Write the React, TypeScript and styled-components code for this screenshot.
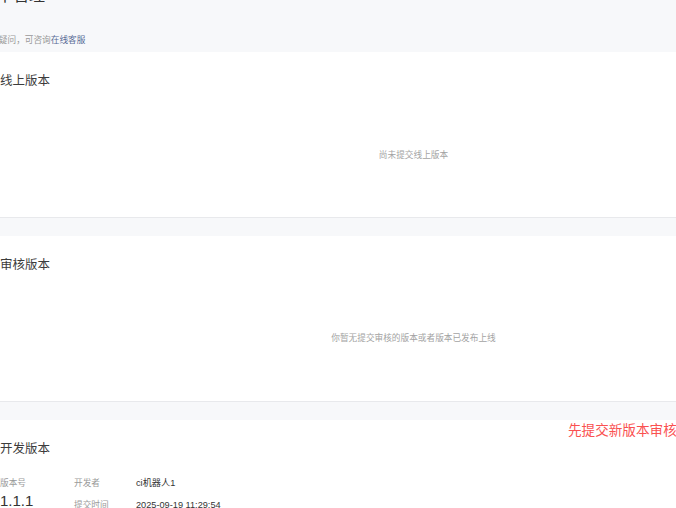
import React from "react";
import styled, { createGlobalStyle } from "styled-components";

const GlobalStyle = createGlobalStyle`
  html, body {
    margin: 0;
    padding: 0;
    background: #f7f8fa;
  }
  body {
    font-family: "Liberation Sans", "Noto Sans CJK SC", sans-serif;
    color: #333;
    overflow: hidden;
  }
`;

const Viewport = styled.div`
  width: 676px;
  height: 508px;
  overflow: hidden;
  background: #f7f8fa;
`;

const Content = styled.div`
  width: 827px;
`;

const Header = styled.header`
  height: 52px;
  display: flex;
  flex-direction: column;
`;

const PageTitle = styled.h1`
  margin: -12px 0 0 -19px;
  font-size: 16px;
  line-height: 16px;
  font-weight: 400;
  color: #333;
  white-space: nowrap;
`;

const Hint = styled.p`
  margin: 30px 0 0 -18.5px;
  font-size: 8.67px;
  line-height: 12px;
  color: #999;
  white-space: nowrap;
`;

const Link = styled.a`
  color: #576b95;
  text-decoration: none;
`;

const Section = styled.section<{ $fixedHeight?: boolean }>`
  position: relative;
  background: #fff;
  height: ${(p) => (p.$fixedHeight ? "165px" : "auto")};
  border-bottom: 1px solid #e8e9ec;
  margin-bottom: 18px;
  display: flex;
  flex-direction: column;
`;

const SectionTitle = styled.h2`
  margin: 21px 0 0;
  font-size: 12.5px;
  line-height: 16px;
  font-weight: 400;
  color: #3c3c3c;
`;

const EmptyState = styled.div<{ $offset: number }>`
  margin-top: ${(p) => p.$offset}px;
  text-align: center;
  font-size: 8.67px;
  line-height: 12px;
  color: #a3a3a3;
`;

const Notice = styled.div`
  position: absolute;
  top: 2px;
  left: 568px;
  font-size: 13.6px;
  line-height: 18px;
  color: #fa5151;
  white-space: nowrap;
`;

const InfoRow = styled.div`
  display: flex;
  margin-top: 20px;
  padding-bottom: 20px;
`;

const VersionCol = styled.div`
  width: 74px;
  display: flex;
  flex-direction: column;
`;

const Label = styled.span`
  font-size: 8.67px;
  line-height: 12px;
  color: #9a9a9a;
  white-space: nowrap;
`;

const VersionNumber = styled.span`
  margin-top: 3px;
  font-size: 15px;
  line-height: 18px;
  color: #333;
`;

const MetaGrid = styled.div`
  display: grid;
  grid-template-columns: 62px auto;
  row-gap: 10px;
`;

const Value = styled.span`
  font-size: 9.2px;
  line-height: 12px;
  color: #333;
  white-space: nowrap;
`;

export default function App() {
  return (
    <>
      <GlobalStyle />
      <Viewport>
        <Content>
          <Header>
            <PageTitle>版本管理</PageTitle>
            <Hint>
              如有疑问，可咨询<Link href="#">在线客服</Link>
            </Hint>
          </Header>

          <Section $fixedHeight>
            <SectionTitle>线上版本</SectionTitle>
            <EmptyState $offset={60}>尚未提交线上版本</EmptyState>
          </Section>

          <Section $fixedHeight>
            <SectionTitle>审核版本</SectionTitle>
            <EmptyState $offset={59}>你暂无提交审核的版本或者版本已发布上线</EmptyState>
          </Section>

          <Section>
            <Notice>先提交新版本审核</Notice>
            <SectionTitle>开发版本</SectionTitle>
            <InfoRow>
              <VersionCol>
                <Label>版本号</Label>
                <VersionNumber>1.1.1</VersionNumber>
              </VersionCol>
              <MetaGrid>
                <Label>开发者</Label>
                <Value>ci机器人1</Value>
                <Label>提交时间</Label>
                <Value>2025-09-19 11:29:54</Value>
              </MetaGrid>
            </InfoRow>
          </Section>
        </Content>
      </Viewport>
    </>
  );
}
